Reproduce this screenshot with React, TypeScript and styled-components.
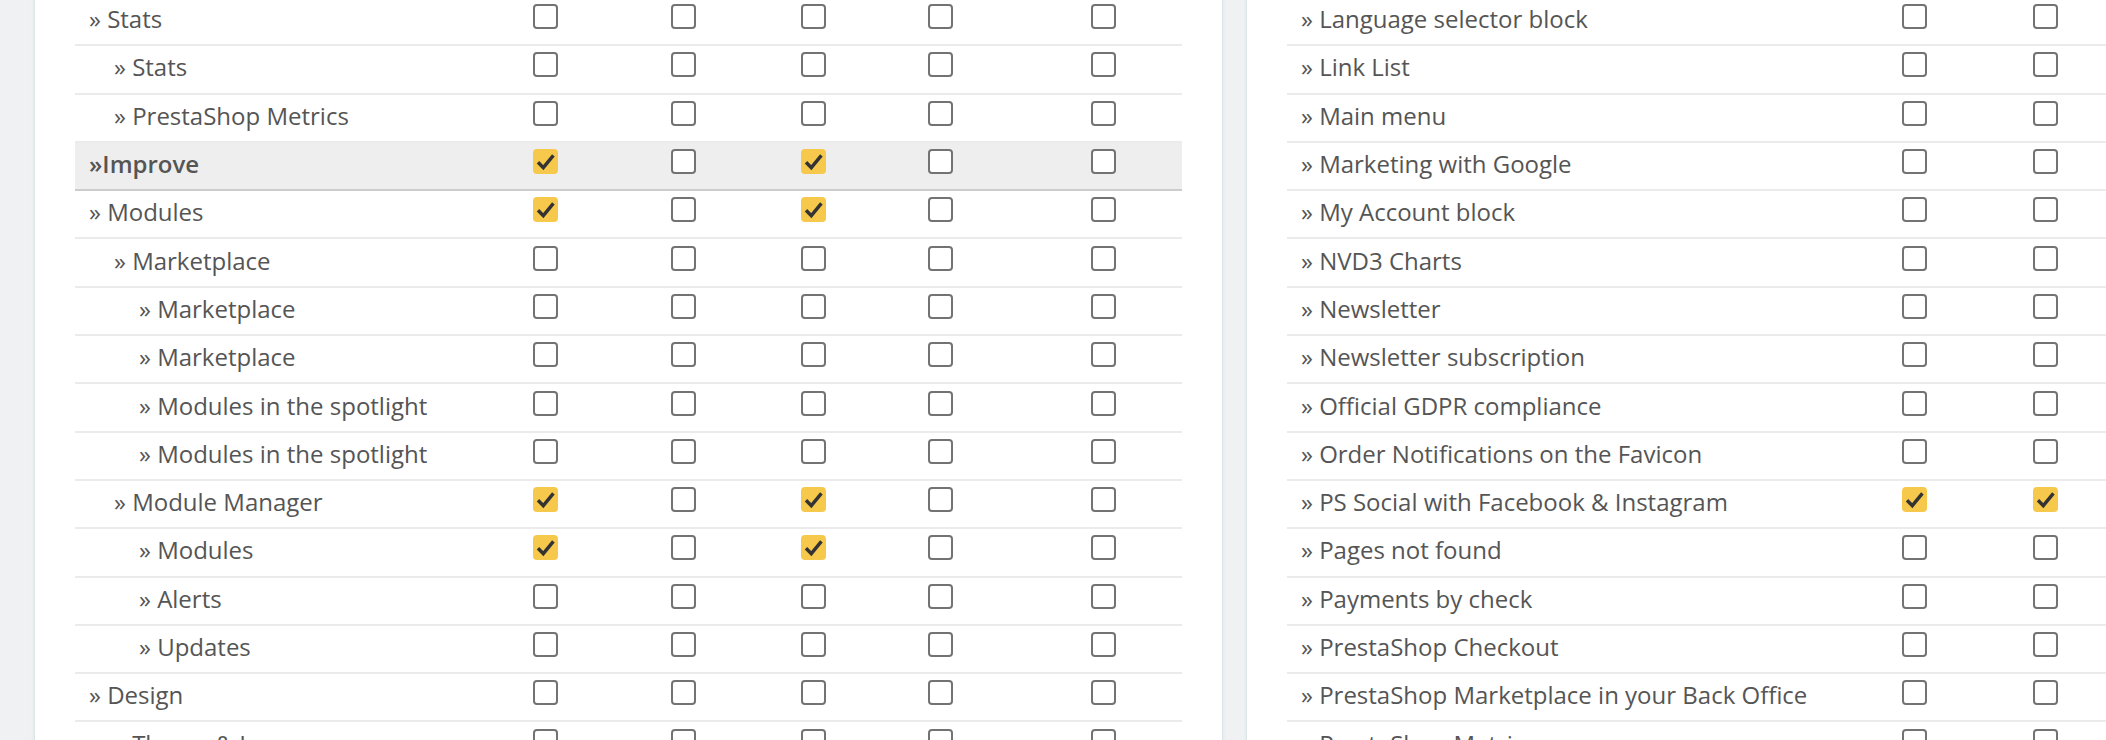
import React from 'react';
import styled, { createGlobalStyle } from 'styled-components';

const GlobalStyle = createGlobalStyle`
  html, body {
    margin: 0;
    padding: 0;
    overflow: hidden;
    background-color: #eff1f2;
    font-family: 'Open Sans', 'Noto Sans', sans-serif;
  }
`;

const Page = styled.div`
  display: flex;
  align-items: flex-start;
  gap: 23px;
  padding-left: 34px;
  margin-top: -3px;
  width: max-content;
`;

const Panel = styled.section`
  box-sizing: border-box;
  width: 1189px;
  padding: 0 40px 40px;
  background-color: #fff;
  border: 1px solid #dbe6e9;
  box-shadow: 0 0 4px 0 rgba(0, 0, 0, 0.06);
`;

const Row = styled.div<{ $cols: string; $header?: boolean }>`
  box-sizing: border-box;
  display: grid;
  grid-template-columns: ${(p) => p.$cols};
  align-items: center;
  height: 48.3px;
  background-color: ${(p) => (p.$header ? '#eeeeee' : 'transparent')};
  border-bottom: 2px solid ${(p) => (p.$header ? '#cccccc' : '#ebebeb')};
`;

const Label = styled.div<{ $level: number; $header?: boolean }>`
  padding-left: ${(p) => 14 + p.$level * 25}px;
  margin-bottom: 5px;
  font-size: 24px;
  font-weight: ${(p) => (p.$header ? 600 : 400)};
  color: #555;
  white-space: nowrap;
`;

const Cell = styled.div`
  display: flex;
  justify-content: center;
`;

const Box = styled.span<{ $checked: boolean }>`
  box-sizing: border-box;
  display: flex;
  align-items: center;
  justify-content: center;
  width: 25px;
  height: 25px;
  margin-bottom: 9px;
  border-radius: 4px;
  border: ${(p) => (p.$checked ? 'none' : '2px solid #737373')};
  background-color: ${(p) => (p.$checked ? '#f6c94c' : '#fff')};
`;

const Check: React.FC<{ checked: boolean }> = ({ checked }) => (
  <Box $checked={checked}>
    {checked && (
      <svg width="25" height="25" viewBox="0 0 25 25">
        <path
          d="M5 13.2 L10.3 18.6 L20.4 6.4"
          fill="none"
          stroke="#333"
          strokeWidth="3.4"
          strokeLinejoin="miter"
        />
      </svg>
    )}
  </Box>
);

type Item = { label: string; level: number; checks: number[]; header?: boolean };

const LEFT_COLS = '418px 104px 172px 88px 166px 160px';
const RIGHT_COLS = '570px 114px 148px 148px 127px';

const leftRows: Item[] = [
  { label: '» Stats', level: 0, checks: [] },
  { label: '» Stats', level: 1, checks: [] },
  { label: '» PrestaShop Metrics', level: 1, checks: [] },
  { label: '»Improve', level: 0, checks: [0, 2], header: true },
  { label: '» Modules', level: 0, checks: [0, 2] },
  { label: '» Marketplace', level: 1, checks: [] },
  { label: '» Marketplace', level: 2, checks: [] },
  { label: '» Marketplace', level: 2, checks: [] },
  { label: '» Modules in the spotlight', level: 2, checks: [] },
  { label: '» Modules in the spotlight', level: 2, checks: [] },
  { label: '» Module Manager', level: 1, checks: [0, 2] },
  { label: '» Modules', level: 2, checks: [0, 2] },
  { label: '» Alerts', level: 2, checks: [] },
  { label: '» Updates', level: 2, checks: [] },
  { label: '» Design', level: 0, checks: [] },
  { label: '» Theme & Logo', level: 1, checks: [] },
];

const rightRows: Item[] = [
  'Language selector block',
  'Link List',
  'Main menu',
  'Marketing with Google',
  'My Account block',
  'NVD3 Charts',
  'Newsletter',
  'Newsletter subscription',
  'Official GDPR compliance',
  'Order Notifications on the Favicon',
  'PS Social with Facebook & Instagram',
  'Pages not found',
  'Payments by check',
  'PrestaShop Checkout',
  'PrestaShop Marketplace in your Back Office',
  'PrestaShop Metrics',
].map((name) => ({
  label: `» ${name}`,
  level: 0,
  checks: name.startsWith('PS Social') ? [0, 1] : [],
}));

const PermissionTable: React.FC<{ rows: Item[]; cols: string; count: number }> = ({
  rows,
  cols,
  count,
}) => (
  <div>
    {rows.map((r, i) => (
      <Row key={i} $cols={cols} $header={r.header}>
        <Label $level={r.level} $header={r.header}>
          {r.label}
        </Label>
        {Array.from({ length: count }).map((_, c) => (
          <Cell key={c}>
            <Check checked={r.checks.includes(c)} />
          </Cell>
        ))}
      </Row>
    ))}
  </div>
);

const App: React.FC = () => {
  return (
    <>
      <GlobalStyle />
      <Page>
        <Panel>
          <PermissionTable rows={leftRows} cols={LEFT_COLS} count={5} />
        </Panel>
        <Panel>
          <PermissionTable rows={rightRows} cols={RIGHT_COLS} count={4} />
        </Panel>
      </Page>
    </>
  );
};

export default App;
